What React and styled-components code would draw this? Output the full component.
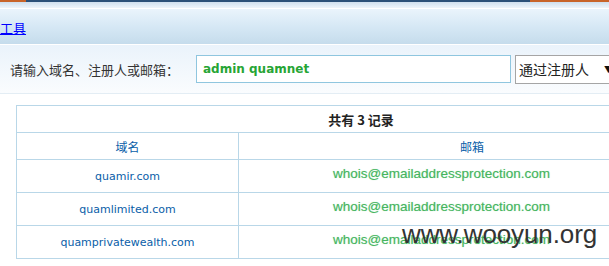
import React from "react";
import styled, { createGlobalStyle } from "styled-components";

const Global = createGlobalStyle`
  html, body { margin: 0; padding: 0; background: #fff; overflow: hidden; }
  body { width: 609px; height: 266px; font-family: "DejaVu Sans", "Noto Sans CJK SC", sans-serif; }
`;

const Page = styled.div`
  position: relative;
  width: 609px;
  height: 266px;
  overflow: hidden;
`;

const TopLine = styled.div`
  height: 2px;
  background: linear-gradient(to right, #c8642a 0, #c8642a 26px, #2b5078 26px, #2b5078 530px, #c8642a 530px);
`;

const SubStrip = styled.div`
  height: 6px;
  background: linear-gradient(#cfdfee, #eef5fb);
  border-bottom: 1px solid #fff;
`;

const Header = styled.div`
  height: 35px;
  display: flex;
  align-items: center;
  background: linear-gradient(#eaf4fc, #d6e8f5 50%, #c5dcec);
  border-bottom: 1px solid #fff;
`;

const ToolLink = styled.a`
  font-family: "Noto Sans CJK SC", sans-serif;
  font-size: 13px;
  color: #0000ff;
  text-decoration: underline;
  margin-top: 1px;
`;

const SearchBar = styled.div`
  height: 48px;
  display: flex;
  align-items: center;
  padding-left: 10px;
  background: linear-gradient(#eaf3fb, #fafcfe);
  border-bottom: 1px solid #e3edf4;
  width: 800px;
`;

const Label = styled.span`
  font-family: "Noto Sans CJK SC", sans-serif;
  font-size: 13px;
  color: #333;
  width: 186px;
  flex-shrink: 0;
`;

const Input = styled.div`
  box-sizing: border-box;
  width: 315px;
  height: 28px;
  flex-shrink: 0;
  border: 1px solid #8fc6df;
  background: #fff;
  display: flex;
  align-items: center;
  padding-left: 6px;
  font-family: "DejaVu Sans", sans-serif;
  font-weight: bold;
  font-size: 12px;
  color: #27a535;
`;

const Select = styled.div`
  box-sizing: border-box;
  margin-left: 4px;
  width: 110px;
  height: 29px;
  border: 1px solid #a5a5a5;
  background: #fff;
  display: flex;
  align-items: center;
  padding-left: 3px;
  font-family: "Noto Sans CJK SC", sans-serif;
  font-size: 14px;
  color: #222;
  flex-shrink: 0;
`;

const Arrow = styled.span`
  font-size: 9px;
  margin-left: 15px;
  color: #111;
`;

const Table = styled.table`
  margin: 11px 0 0 16px;
  width: 690px;
  border-collapse: collapse;
  table-layout: fixed;
  td { border: 1px solid #b9d7e8; padding: 0; text-align: center; }
`;

const TitleCell = styled.td`
  height: 26px;
  font-family: "Noto Sans CJK SC", sans-serif;
  font-weight: bold;
  font-size: 13px;
  color: #222;
`;

const HeadCell = styled.td`
  height: 26px;
  font-family: "Noto Sans CJK SC", sans-serif;
  font-size: 12px;
  color: #0a5ea8;
`;

const DomainCell = styled.td`
  height: 32px;
  font-family: "DejaVu Sans", sans-serif;
  font-size: 11px;
  color: #0a5ea8;
`;

const EmailCell = styled.td`
  height: 28px;
  && { text-align: left; padding-left: 94px; padding-bottom: 4px; }
  font-family: "Liberation Sans", Arial, sans-serif;
  font-size: 13.5px;
  color: #46b560;
  text-shadow: 0 0 1px rgba(70, 185, 100, 0.45);
  vertical-align: middle;
  line-height: 1;
`;

const Watermark = styled.div`
  position: absolute;
  left: 402px;
  top: 219px;
  font-family: "Liberation Sans", Arial, sans-serif;
  font-size: 26px;
  color: #333;
  letter-spacing: -0.1px;
`;

const rows = ["quamir.com", "quamlimited.com", "quamprivatewealth.com"];

export default function App() {
  return (
    <Page>
      <Global />
      <TopLine />
      <SubStrip />
      <Header>
        <ToolLink>工具</ToolLink>
      </Header>
      <SearchBar>
        <Label>请输入域名、注册人或邮箱：</Label>
        <Input>admin quamnet</Input>
        <Select>
          通过注册人<Arrow>▼</Arrow>
        </Select>
      </SearchBar>
      <Table>
        <colgroup>
          <col style={{ width: 222 }} />
          <col />
        </colgroup>
        <tbody>
          <tr>
            <TitleCell colSpan={2}>共有 3 记录</TitleCell>
          </tr>
          <tr>
            <HeadCell>域名</HeadCell>
            <HeadCell>邮箱</HeadCell>
          </tr>
          {rows.map((d) => (
            <tr key={d}>
              <DomainCell>{d}</DomainCell>
              <EmailCell>whois@emailaddressprotection.com</EmailCell>
            </tr>
          ))}
        </tbody>
      </Table>
      <Watermark>www.wooyun.org</Watermark>
    </Page>
  );
}
